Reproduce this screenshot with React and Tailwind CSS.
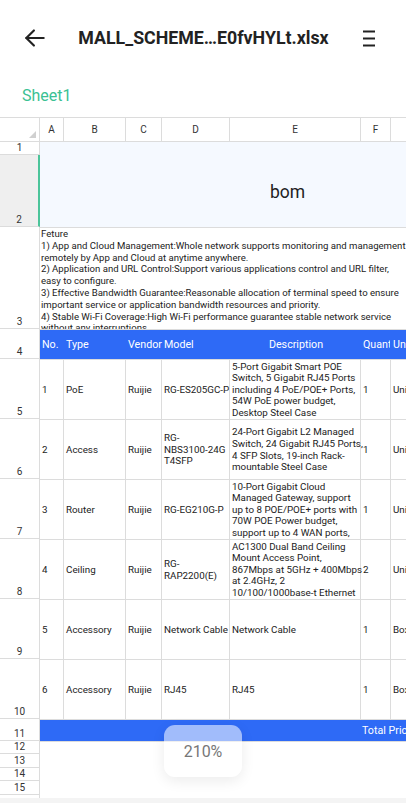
import React from "react";

const BLUE = "bg-[#2e6af6]";

const rows = [
  { no: "1", type: "PoE", vendor: "Ruijie", model: ["RG-ES205GC-P"], desc: ["5-Port Gigabit Smart POE", "Switch, 5 Gigabit RJ45 Ports", "including 4 PoE/POE+ Ports,", "54W PoE power budget,", "Desktop Steel Case"], qty: "1", unit: "Unit" },
  { no: "2", type: "Access", vendor: "Ruijie", model: ["RG-", "NBS3100-24G", "T4SFP"], desc: ["24-Port Gigabit L2 Managed", "Switch, 24 Gigabit RJ45 Ports,", "4 SFP Slots, 19-inch Rack-", "mountable Steel Case"], qty: "1", unit: "Unit" },
  { no: "3", type: "Router", vendor: "Ruijie", model: ["RG-EG210G-P"], desc: ["10-Port Gigabit Cloud", "Managed Gateway, support", "up to 8 POE/POE+ ports with", "70W POE Power budget,", "support up to 4 WAN ports,"], qty: "1", unit: "Unit" },
  { no: "4", type: "Ceiling", vendor: "Ruijie", model: ["RG-", "RAP2200(E)"], desc: ["AC1300 Dual Band Ceiling", "Mount Access Point,", "867Mbps at 5GHz + 400Mbps", "at 2.4GHz, 2", "10/100/1000base-t Ethernet"], qty: "2", unit: "Unit" },
  { no: "5", type: "Accessory", vendor: "Ruijie", model: ["Network Cable"], desc: ["Network Cable"], qty: "1", unit: "Box" },
  { no: "6", type: "Accessory", vendor: "Ruijie", model: ["RJ45"], desc: ["RJ45"], qty: "1", unit: "Box" },
];

const cols = [
  { l: "A", w: "w-[24px]" },
  { l: "B", w: "w-[62px]" },
  { l: "C", w: "w-[36px]" },
  { l: "D", w: "w-[68px]" },
  { l: "E", w: "w-[131px]" },
  { l: "F", w: "w-[30px]" },
  { l: "G", w: "w-[60px]" },
];

const rowHeaders = [
  { n: "1", h: "h-[13px]" },
  { n: "2", h: "h-[72px]", sel: true },
  { n: "3", h: "h-[102px]" },
  { n: "4", h: "h-[30px]" },
  { n: "5", h: "h-[60px]" },
  { n: "6", h: "h-[60px]" },
  { n: "7", h: "h-[60px]" },
  { n: "8", h: "h-[60px]" },
  { n: "9", h: "h-[60px]" },
  { n: "10", h: "h-[60px]" },
  { n: "11", h: "h-[22px]" },
  { n: "12", h: "h-[13px]" },
  { n: "13", h: "h-[14px]" },
  { n: "14", h: "h-[13px]" },
  { n: "15", h: "h-[14px]" },
  { n: "", h: "h-[20px]" },
];

function Cell({ w, children, className = "" }) {
  return (
    <div className={`${w} shrink-0 h-full border-r border-[#dcdcdc] flex flex-col justify-center pl-[2px] whitespace-nowrap ${className}`}>
      {children}
    </div>
  );
}

export default function App() {
  return (
    <div
      className="w-[406px] h-[803px] bg-white flex flex-col overflow-hidden text-[#222] relative"
      style={{ fontFamily: "Roboto, 'Noto Sans', Arial, sans-serif" }}
    >
      {/* Title bar */}
      <div className="h-[76px] shrink-0 flex items-center pl-[22px] pr-[31px]">
        <svg width="26" height="26" viewBox="0 0 24 24" fill="none" stroke="#222" strokeWidth="2" strokeLinecap="round" strokeLinejoin="round">
          <path d="M20 12H4" />
          <path d="M11 5l-7 7 7 7" />
        </svg>
        <div className="flex-1 text-center text-[17.8px] font-bold ml-[-4px]">MALL_SCHEME…E0fvHYLt.xlsx</div>
        <svg width="12" height="17" viewBox="0 0 12 17" fill="none" stroke="#222" strokeWidth="2">
          <path d="M0 1.5H12" />
          <path d="M0 8.5H12" />
          <path d="M0 15.5H12" />
        </svg>
      </div>

      {/* Sheet tab */}
      <div className="h-[41px] shrink-0 flex items-start pt-[8px] pl-[22px]">
        <span className="text-[16px] text-[#3bc193]">Sheet1</span>
      </div>

      {/* Grid */}
      <div className="flex-1 flex flex-col border-t border-[#dcdcdc] overflow-hidden">
        {/* Column header */}
        <div className="h-[24px] shrink-0 flex border-b border-[#dcdcdc] text-[10px] text-[#333]">
          <div className="w-[40px] shrink-0 h-full border-r border-[#dcdcdc] relative">
            <div className="absolute right-[3px] bottom-[3px] w-0 h-0 border-l-[7px] border-l-transparent border-b-[7px] border-b-[#d0d0d0]" />
          </div>
          {cols.map((c) => (
            <div key={c.l} className={`${c.w} shrink-0 h-full border-r border-[#dcdcdc] flex items-center justify-center`}>
              {c.l}
            </div>
          ))}
        </div>

        <div className="flex-1 flex overflow-hidden">
          {/* Row headers */}
          <div className="w-[40px] shrink-0 flex flex-col text-[10px] text-[#333]">
            {rowHeaders.map((r, i) => (
              <div
                key={i}
                className={`${r.h} shrink-0 border-b border-[#dcdcdc] flex items-end justify-center leading-none pb-[1px] ${r.sel ? "bg-[#efefef] border-r-2 border-r-[#4cc49a]" : "border-r border-r-[#dcdcdc]"}`}
              >
                {r.n}
              </div>
            ))}
          </div>

          {/* Cells */}
          <div className="flex-1 flex flex-col min-w-0 text-[9.8px] leading-[11.6px]">
            {/* rows 1-2 merged */}
            <div className="h-[86px] shrink-0 bg-[#f5f9ff] border-b border-[#dcdcdc] flex items-center pl-[230px] pt-[16px]">
              <span className="text-[17.5px] leading-none">bom</span>
            </div>
            {/* row 3 */}
            <div className="h-[102px] shrink-0 border-b border-[#dcdcdc] overflow-hidden pl-[1px] whitespace-nowrap text-[9.6px] leading-[11.8px]">
              <div>Feture</div>
              <div>1) App and Cloud Management:Whole network supports monitoring and management</div>
              <div>remotely by App and Cloud at anytime anywhere.</div>
              <div>2) Application and URL Control:Support various applications control and URL filter,</div>
              <div>easy to configure.</div>
              <div>3) Effective Bandwidth Guarantee:Reasonable allocation of terminal speed to ensure</div>
              <div>important service or application bandwidth resources and priority.</div>
              <div>4) Stable Wi-Fi Coverage:High Wi-Fi performance guarantee stable network service</div>
              <div>without any interruptions.</div>
            </div>
            {/* row 4 header */}
            <div className={`h-[30px] shrink-0 ${BLUE} flex text-white text-[10.7px] border-b border-[#dcdcdc]`}>
              <Cell w="w-[24px]" className="border-r-[#2e6af6] pl-[1px]">No.</Cell>
              <Cell w="w-[62px]" className="border-r-[#2e6af6]">Type</Cell>
              <Cell w="w-[36px]" className="border-r-[#2e6af6] pl-0">Vendor</Cell>
              <Cell w="w-[68px]" className="border-r-[#2e6af6] pl-[1px]">Model</Cell>
              <Cell w="w-[131px]" className="border-r-[#2e6af6] items-center pl-0">Description</Cell>
              <Cell w="w-[30px]" className="border-r-[#2e6af6] pl-[1px] overflow-hidden">Quant</Cell>
              <Cell w="w-[60px]" className="border-r-[#2e6af6] pl-[1px]">Unit</Cell>
            </div>
            {/* data rows */}
            {rows.map((r) => (
              <div key={r.no} className="h-[60px] shrink-0 flex border-b border-[#dcdcdc]">
                <Cell w="w-[24px]" className="pl-[1px]">{r.no}</Cell>
                <Cell w="w-[62px]">{r.type}</Cell>
                <Cell w="w-[36px]" className="pl-[1px]">{r.vendor}</Cell>
                <Cell w="w-[68px]" className="pl-[1px]">
                  {r.model.map((m) => (
                    <div key={m}>{m}</div>
                  ))}
                </Cell>
                <Cell w="w-[131px]">
                  {r.desc.map((d) => (
                    <div key={d}>{d}</div>
                  ))}
                </Cell>
                <Cell w="w-[30px]" className="pl-[2px]">{r.qty}</Cell>
                <Cell w="w-[60px]" className="pl-[1px]">{r.unit}</Cell>
              </div>
            ))}
            {/* row 11 total */}
            <div className={`h-[22px] shrink-0 ${BLUE} border-b border-[#dcdcdc] flex items-center pl-[322px] text-white text-[10.7px] whitespace-nowrap`}>
              Total Price
            </div>
            <div className="flex-1 bg-white" />
          </div>
        </div>
      </div>

      {/* bottom strip */}
      <div className="h-[5px] shrink-0 bg-[#f4f4f4]" />

      {/* zoom overlay */}
      <div className="absolute left-[164px] top-[725px] w-[78px] h-[52px] rounded-[11px] bg-white/55 shadow-[0_4px_14px_rgba(0,0,0,0.08)] flex items-center justify-center">
        <span className="text-[16px] text-[#777] pt-[2px]">210%</span>
      </div>
    </div>
  );
}
